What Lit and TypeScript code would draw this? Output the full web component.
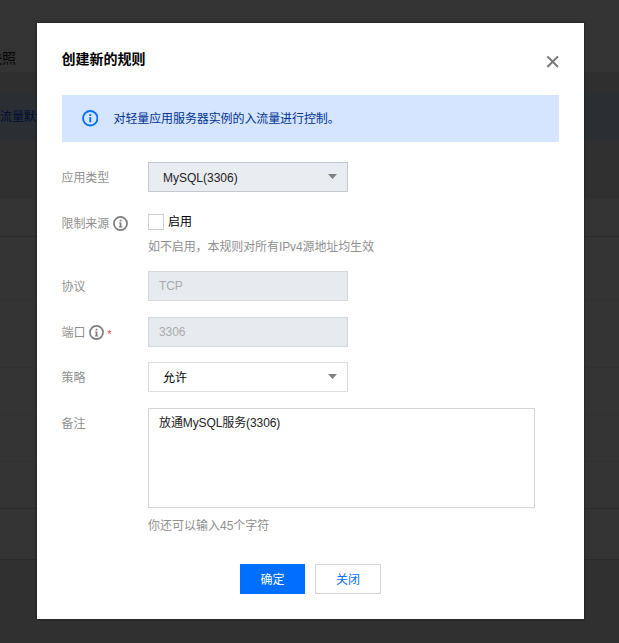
import { LitElement, html, css, svg } from "lit";
import { customElement, property } from "lit/decorators.js";

@customElement("info-icon")
class InfoIcon extends LitElement {
  @property({ type: Boolean }) plain = false;
  static styles = css`
    :host { display: block; flex: none; }
    svg { display: block; width: 100%; height: 100%; }
  `;
  render() {
    const stem = this.plain
      ? svg`<rect x="7.1" y="6.9" width="1.8" height="5" fill="currentColor"/>`
      : svg`<path d="M6.2 6.8H9V11.3H10V12.3H6.2V11.3H7.1V7.8H6.2Z" fill="currentColor"/>`;
    return html`<svg viewBox="0 0 16 16">${svg`
      <circle cx="8" cy="8" r="7" fill="none" stroke="currentColor" stroke-width="1.8"/>
      <rect x="7.1" y="4" width="1.9" height="1.8" fill="currentColor"/>${stem}`}</svg>`;
  }
}

@customElement("form-row")
class FormRow extends LitElement {
  @property() label = "";
  @property({ type: Boolean }) info = false;
  @property({ type: Boolean }) required = false;
  static styles = css`
    :host { display: grid; grid-template-columns: 87px 1fr; align-items: start; }
    .label {
      display: flex; align-items: center; box-sizing: border-box; height: 31px; padding: 1px 0 0 0.5px;
      color: #909090; white-space: nowrap;
    }
    .body { min-height: 30px; margin-bottom: -1px; }
    .icon { width: 15px; height: 15px; margin-left: 4px; color: #7c7c7c; }
    .star { color: #e54545; margin-left: 3px; font-size: 11px; height: 14px; line-height: 17px; }
  `;
  render() {
    return html`
      <div class="label">
        <span>${this.label}</span>
        ${this.info ? html`<info-icon class="icon"></info-icon>` : ""}
        ${this.required ? html`<span class="star">*</span>` : ""}
      </div>
      <div class="body"><slot></slot></div>`;
  }
}

@customElement("app-root")
class AppRoot extends LitElement {
  static styles = css`
    :host {
      display: block; position: relative; width: 619px; height: 643px; overflow: hidden;
      font: 12px/18px "Liberation Sans", "Noto Sans CJK SC", sans-serif; letter-spacing: -0.1px; color: #000;
      background: #303030;
    }
    * { box-sizing: border-box; }
    .page { display: flex; flex-direction: column; height: 643px; }
    .tabs { height: 72px; padding-top: 48px; background: #333; color: #050505; font-size: 14px; line-height: 21px; }
    .tabs span, .notice span { display: block; white-space: nowrap; }
    .tabs span { margin-left: -12px; letter-spacing: 0; }
    .gap { height: 21px; background: #2f2f2f; }
    .notice { height: 47px; padding-top: 15px; background: #2b2f34; color: #000e30; }
    .space { height: 59px; }
    .line { background: #333; border-bottom: 1px solid #303030; }
    .line.strong { border-color: #2b2b2b; }
    .l1 { height: 38px; } .l2 { height: 64px; } .l3 { height: 67px; }
    .l4 { height: 47px; } .l5 { height: 47px; } .l6 { height: 47px; } .l7 { height: 51px; }
    .dialog {
      position: absolute; left: 37px; top: 23px; width: 547px; height: 596px;
      background: #fff; padding: 25px 25px 0 24px; box-shadow: 0 0 2px #111;
    }
    header { display: flex; justify-content: space-between; height: 47px; }
    h1 { margin: 0 0 0 0.5px; font-size: 14px; line-height: 23px; font-weight: 700; letter-spacing: 0; }
    .close { width: 13px; height: 13px; margin-top: 7px; }
    .alert {
      display: flex; align-items: center; height: 47px; margin-left: 0.5px; padding-left: 20px;
      background: #d5e5ff; color: #003290;
    }
    .alert-icon { width: 16.5px; height: 16.5px; color: #006eff; margin-right: 15.5px; }
    .form { display: flex; flex-direction: column; padding-top: 20px; }
    .row { margin-bottom: 14.5px; }
    .box { display: flex; align-items: center; width: 200px; height: 30px; border: 1px solid #ddd; padding: 1px 10px 0 14px; }
    .box span { flex: 1; }
    .box svg { width: 9px; height: 5px; margin-bottom: 2px; }
    .grey { background: #e9ecf1; border-color: #c3c8d1; color: #222; letter-spacing: 0; }
    .disabled { background: #e7eaef; border-color: #d5d8dd; color: #aaa; padding: 0 10px; }
    .source { margin-bottom: 16.5px; }
    .check { display: flex; align-items: center; height: 30px; gap: 4px; }
    .check span { margin-top: -1px; }
    .tick { width: 16px; height: 16px; border: 1px solid #d0d0d0; margin-top: -1px; }
    .hint { height: 18px; color: #909090; }
    .area { width: 387px; height: 100px; border: 1px solid #d5d5d5; padding: 5px 10px; color: #222; }
    .count { margin-top: 9px; letter-spacing: 0; }
    footer { display: flex; justify-content: center; gap: 10px; padding: 30px 0 0 1px; }
    .btn {
      width: 66px; height: 30px; border: 1px solid #d5d5d5; text-align: center; line-height: 30px;
      color: #006eff; letter-spacing: 0;
    }
    .primary { width: 65px; border-color: #006eff; background: #006eff; color: #fff; }
  `;

  arrow() {
    return html`<svg viewBox="0 0 9 5"><path d="M0 0H9L4.5 5Z" fill="#808080"/></svg>`;
  }

  render() {
    return html`
      <div class="page">
        <div class="tabs"><span>快照</span></div>
        <div class="gap"></div>
        <div class="notice"><span>流量默认</span></div>
        <div class="space"></div>
        <div class="line strong l1"></div>
        <div class="line l2"></div>
        <div class="line l3"></div>
        <div class="line l4"></div>
        <div class="line l5"></div>
        <div class="line strong l6"></div>
        <div class="line strong l7"></div>
      </div>
      <div class="dialog">
        <header>
          <h1>创建新的规则</h1>
          <svg class="close" viewBox="0 0 13 13"><path d="M1.4 1.4L12 12M12 1.4L1.4 12" stroke="#777" stroke-width="2"/></svg>
        </header>
        <div class="alert"><info-icon plain class="alert-icon"></info-icon>对轻量应用服务器实例的入流量进行控制。</div>
        <div class="form">
          <form-row class="row" label="应用类型"><div class="box grey"><span>MySQL(3306)</span>${this.arrow()}</div></form-row>
          <form-row class="source" label="限制来源" info>
            <div class="check"><div class="tick"></div><span>启用</span></div>
            <div class="hint">如不启用，本规则对所有IPv4源地址均生效</div>
          </form-row>
          <form-row class="row" label="协议"><div class="box disabled">TCP</div></form-row>
          <form-row class="row" label="端口" info required><div class="box disabled">3306</div></form-row>
          <form-row class="row" label="策略"><div class="box"><span>允许</span>${this.arrow()}</div></form-row>
          <form-row label="备注">
            <div class="area">放通MySQL服务(3306)</div>
            <div class="hint count">你还可以输入45个字符</div>
          </form-row>
        </div>
        <footer><div class="btn primary">确定</div><div class="btn">关闭</div></footer>
      </div>`;
  }
}
